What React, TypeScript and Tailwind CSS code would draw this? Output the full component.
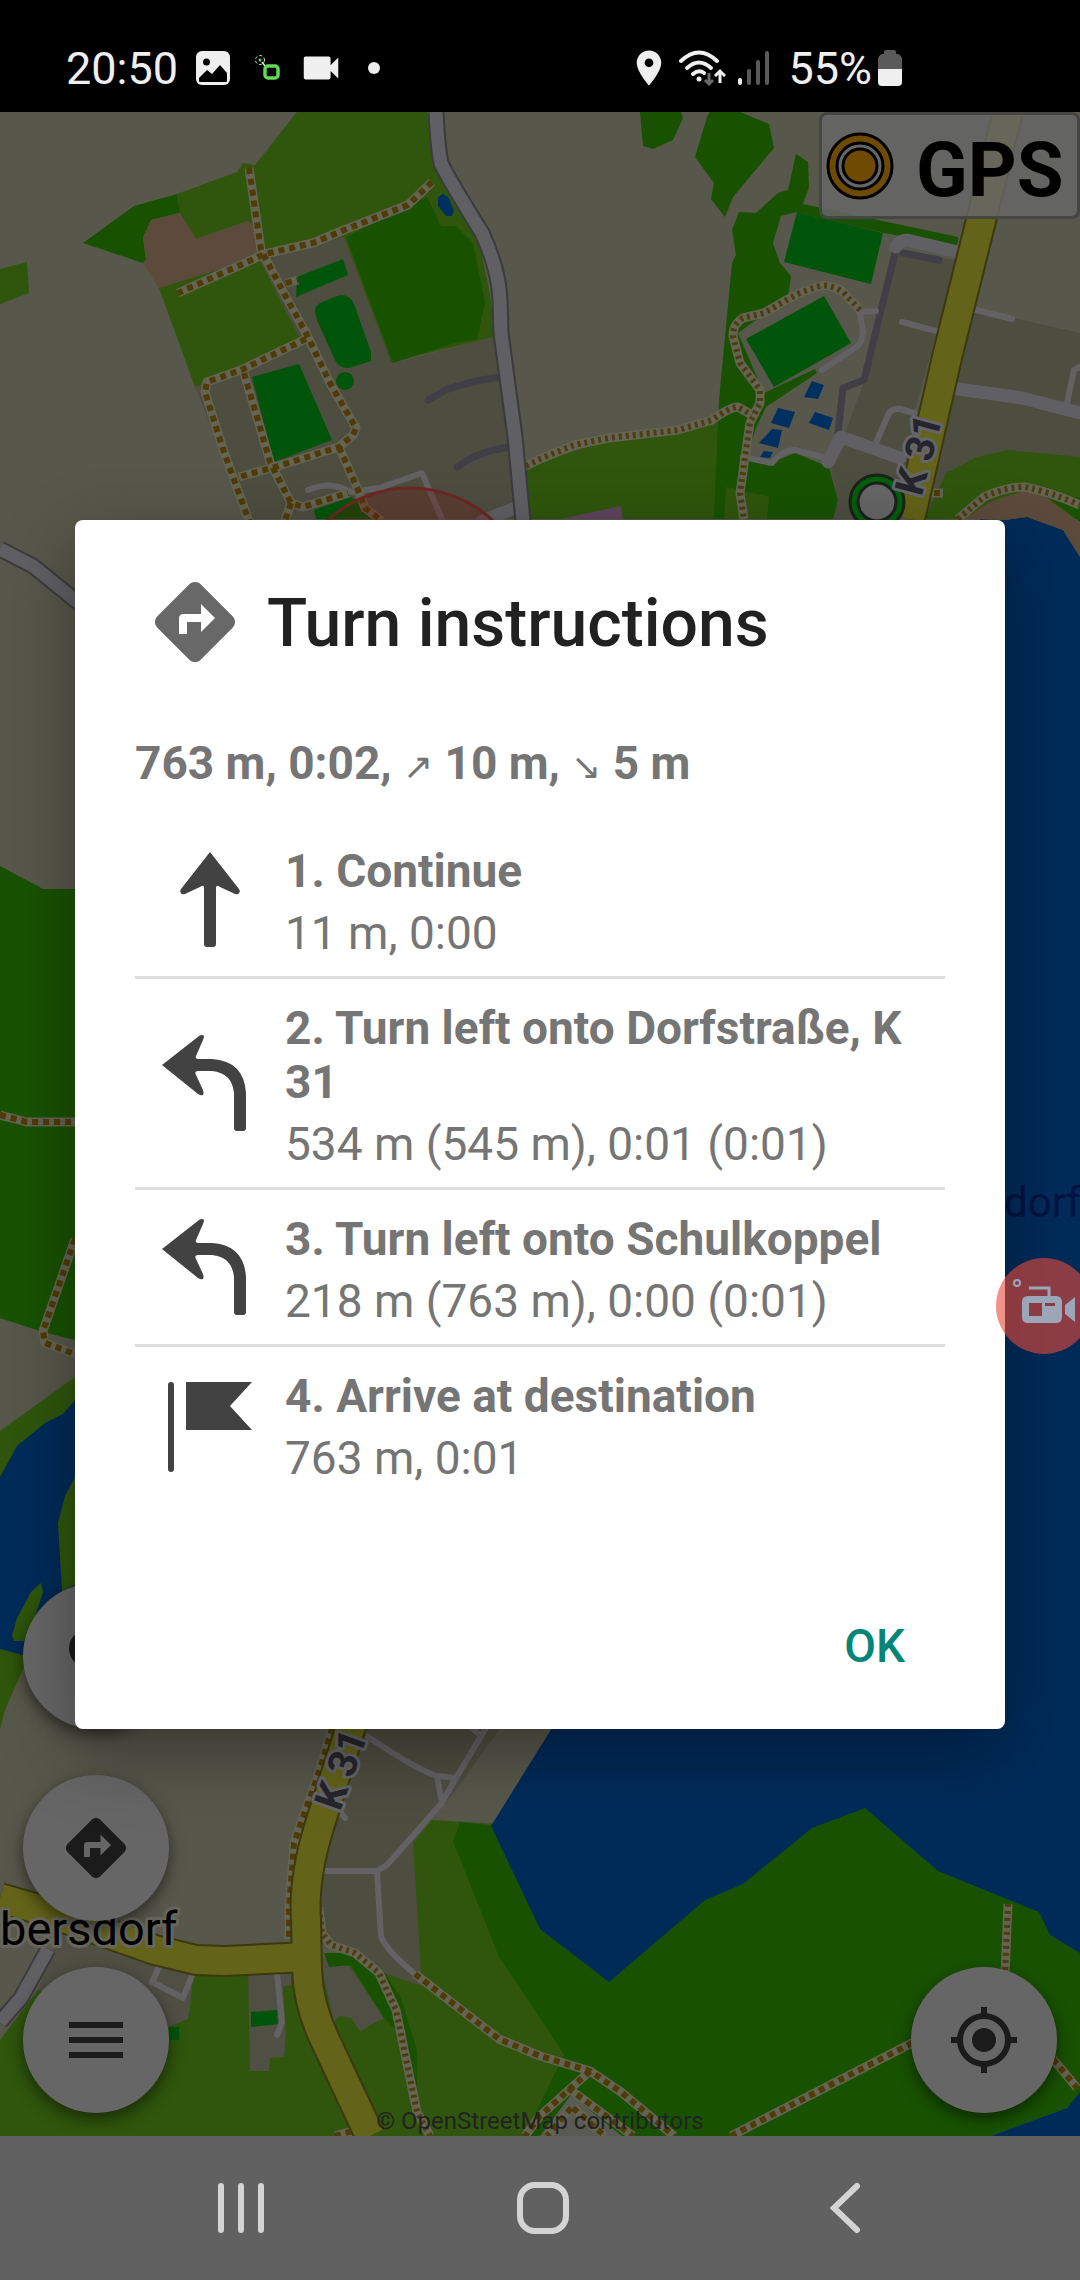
import { MdDirections, MdLocationOn, MdMenu, MdMyLocation, MdSearch, MdVideocam } from 'react-icons/md'

type Step = {
  title: string
  detail: string
  icon: 'straight' | 'left' | 'flag'
}

const steps: Step[] = [
  { title: '1. Continue', detail: '11 m, 0:00', icon: 'straight' },
  { title: '2. Turn left onto Dorfstraße, K 31', detail: '534 m (545 m), 0:01 (0:01)', icon: 'left' },
  { title: '3. Turn left onto Schulkoppel', detail: '218 m (763 m), 0:00 (0:01)', icon: 'left' },
  { title: '4. Arrive at destination', detail: '763 m, 0:01', icon: 'flag' },
]

const residential = [
  '258,257 344,237 393,363 494,337 525,519 250,519 195,387 300,338',
  '896,253 957,260 915,410 900,519 833,519 838,500 830,465 846,430 865,380',
  '970,308 1080,333 1080,460 1008,450 950,470 925,519 910,519',
  '355,1728 500,1728 456,1790 413,1843 425,1984 401,1996 382,1969 325,1945 310,1900',
]

const meadows = [
  '297,112 427,112 434,168 479,240 491,300 494,337 391,362 344,237 265,255 258,240 248,221 196,239 180,213 177,194 237,172 243,163 255,165',
  '159,288 258,257 300,338 238,370 195,387',
  '0,269 27,262 29,293 0,304',
  '526,470 540,462 609,440 712,422 722,410 720,519 524,519',
  '946,473 977,457 1008,450 1080,457 1080,519 925,519',
  '0,1431 75,1377 75,1500 0,1500',
  '0,1649 23,1654 24,1667 5,1710 0,1729',
  '0,2040 38,1990 189,1975 248,1975 310,1975 330,1955 422,1986 413,1843 432,1820 600,1830 600,2136 0,2136',
]

const woods = [
  '427,197 441,226 456,226 473,243 485,303 477,339 455,343 393,363 346,237 410,205',
  '83,243 134,206 177,194 180,213 151,220 143,237 146,260 143,263',
  '640,112 681,112 683,118 673,140 653,149 643,146',
  '710,112 740,112 769,124 774,148 733,197 725,217 711,199 714,183 695,157 707,117',
  '796,154 808,162 809,187 803,204 958,237 957,247 884,233 797,212 781,216 773,243 780,263 791,276 788,297 738,333 764,393 815,369 817,373 766,407 755,430 747,457 778,460 795,453 829,467 838,500 833,519 714,519 719,400 732,263 736,255 732,230 739,212 756,213 778,193 788,190',
  '0,866 43,889 75,889 75,1340 40,1331 0,1318',
  '324,1953 351,1953 382,1969 401,1998 417,2051 417,2108 411,2108 405,2039 384,2018 351,1965 329,1967',
  '1046,497 1080,497 1080,522 1062,508',
]

const pitches = [
  '297,277 343,259 348,275 296,297',
  '252,377 299,364 332,440 274,462',
  '314,510 351,497 368,506 376,519 316,519',
  '797,212 883,233 871,284 784,262',
  '824,296 851,343 774,387 746,339',
  '251,2012 277,2010 278,2024 251,2027',
  '169,2027 179,2027 179,2040 169,2040',
]

const ponds = [
  '438,197 443,194 448,197 454,210 452,216 446,216 438,206',
  '812,381 824,385 818,399 804,397',
  '778,408 795,412 789,428 771,423',
  '815,412 833,418 829,430 809,423',
  '772,429 782,430 778,448 759,443',
  '764,451 773,452 770,458 760,457',
]

const tracks = [
  'M249 168L261 250L286 297L306 333L331 385L356 428L353 435L339 447L275 467L239 477',
  'M432 182L408 205L344 230L313 243L265 254L178 293',
  'M306 339L241 370L207 382L205 392L224 452L249 521',
  'M244 373L257 417L270 462L291 503L303 507L348 493',
  'M291 503L285 521',
  'M339 447L358 490L365 508L382 521',
  'M286 283L298 280',
  'M912 493L943 493',
  'M0 1115L27 1122L75 1122',
  'M75 1239L43 1331L45 1343L75 1354',
  'M332 1728L320 1769L294 1843L289 1908L289 1939',
  'M415 1974L499 2039L540 2056L590 2071L621 2092L674 2136',
  'M731 2136L912 2043L940 2030',
  'M1053 2059L1077 2088',
  'M590 2071L571 2088L540 2116L525 2136',
  'M568 2088L633 2136',
  'M573 2108L605 2136',
  'M571 2108L547 2136',
  'M335 2136L353 2131',
]

const footpaths = [
  'M526 466L540 459L574 445L609 438L678 430L712 420Q730 407 738 407L752 415',
  'M860 310L843 292Q830 284 820 286Q805 290 790 298L764 313L743 318Q733 324 733 336L740 363L760 390L760 403L750 423L745 457L740 493L744 519',
  'M958 519L984 497Q1005 487 1025 487Q1050 492 1080 505',
  'M319 1908L322 1933L331 1945L355 1953L379 1973L396 2010L406 2059L417 2112L430 2136',
  'M1008 1904L1005 1975',
]

const lanes = [
  'M308 490Q331 480 351 492L379 488L422 473L442 519',
  'M876 311L860 312L863 333Q862 344 855 348L822 370',
  'M902 322L936 331',
  'M972 309L1012 319',
  'M876 443L888 415Q891 408 900 409L914 413',
  'M1067 403L1074 370L1080 367',
  'M743 457L772 463Q782 450 795 450L826 458',
  'M368 1737L396 1755Q420 1770 437 1776L456 1778',
  'M486 1728L456 1778L441 1804L387 1865L377 1871L320 1871',
  'M377 1871L381 1937Q388 1952 415 1974',
  'M437 1776L441 1798',
  'M472 1728L480 1735',
  'M160 1965L152 1982L183 1998L193 1973',
  'M277 1973L282 2022L277 2035',
  'M336 1808L345 1818',
]

const alleys = [
  'M428 400L448 389Q475 380 501 377',
  'M457 467Q480 450 513 447',
  'M895 253L864 380L843 388L838 433',
  'M903 253L939 260',
]

const streets = [
  'M482 521L518 507',
  'M896 247Q900 240 907 240L958 252',
  'M828 462L841 437L900 458',
  'M951 388L1022 398L1080 413',
]

const countryRoads = [
  'M436 112Q438 150 441 163Q446 175 482 233Q499 270 500 300L501 333L515 437L523 521',
  'M0 549L33 566L75 600L110 625',
  'M48 1949L21 1998L0 2022',
]

const mainRoads = [
  'M1008 112L948 353L910 519',
  'M0 1898L38 1909L155 1950L196 1960L224 1961L307 1957',
  'M353 1720L319 1827Q303 1880 306 1920L307 1969Q308 2005 325 2040L370 2136',
]

function MapCanvas() {
  return (
    <svg
      viewBox="0 112 1080 2024"
      preserveAspectRatio="xMidYMid slice"
      className="absolute inset-0 h-full w-full"
      fontFamily="Roboto, sans-serif"
      strokeLinejoin="round"
      aria-hidden="true"
    >
      <rect y="112" width="1080" height="2024" fill="#57574b" />
      {residential.map((p) => <polygon key={p} points={p} fill="#4d4d40" />)}
      {meadows.map((p) => <polygon key={p} points={p} fill="#2f560c" />)}
      <polygon points="38,1990 60,1930 195,1960 190,2008 188,2019 169,2027" fill="#4f4f44" />
      <polygon points="248,1970 291,1970 291,1986 283,1986 286,2035 284,2057 270,2058 269,2071 250,2071" fill="#4f4f44" />
      <polygon points="318,1955 350,1967 384,2018 360,2031 351,2018 340,2016 334,2022" fill="#4f4f44" />

      {/* lake, with the wooded shore in front of it */}
      <path d="M980 519L1005 520L1027 517L1063 530L1080 557V1960L640 1990H612L540 1931L491 1826L552 1728H980Z" fill="#002b59" />
      <path d="M0 1477L17 1446L45 1423L63 1414L75 1400V1590H62V1660L23 1655L0 1649Z" fill="#002b59" />
      <polygon points="75,1477 65,1496 58,1523 62,1591 75,1585" fill="#2f560c" />
      <polygon points="41,1583 43,1592 36,1614 24,1641 14,1641 12,1636 17,1618 31,1592" fill="#2f560c" />
      {woods.map((p) => <polygon key={p} points={p} fill="#185200" />)}
      <polygon
        points="460,1822 491,1826 540,1929 609,1982 705,1900 743,1884 812,1828 865,1808 938,1871 1039,1912 1050,1935 1080,1953 1080,2092 1067,2108 991,2136 525,2136 540,2104 564,2055 540,2018 499,1957 453,1841"
        fill="#185200"
      />
      <polygon points="1080,2092 1067,2108 991,2136 1080,2136" fill="#002b59" />
      <polygon points="726,487 769,497 767,519 724,519" fill="#2f560c" />
      <polygon points="180,213 151,220 143,237 146,260 143,263 159,288 258,257 253,225 248,221 196,239" fill="#5c4a3b" />
      <polygon points="965,519 988,503 1025,490 1046,497 1080,523 1080,557 1063,530 1027,517 1005,520" fill="#5c4a3b" />
      <polygon points="561,519 621,506 623,519" fill="#5f455f" />
      <polygon points="571,2095 540,2136 622,2136" fill="#5a5a55" />
      {pitches.map((p) => <polygon key={p} points={p} fill="#00550a" />)}
      <path d="M315 312Q315 306 320 303L337 296Q349 293 354 304L371 352V361L349 368Q340 369 335 360L317 320Z" fill="#00550a" />
      <circle cx="345" cy="381" r="9" fill="#00550a" />
      {ponds.map((p) => <polygon key={p} points={p} fill="#00305f" />)}

      <g fill="none">
        {alleys.map((d) => <path key={d} d={d} stroke="#403e47" strokeWidth="7" strokeLinecap="round" />)}
        {lanes.map((d) => <path key={d} d={d} stroke="#626264" strokeWidth="6" strokeLinecap="round" />)}
        {streets.map((d) => <path key={d} d={d} stroke="#605f63" strokeWidth="13" strokeLinecap="round" />)}
        {tracks.map((d) => <path key={d} d={d} stroke="#636454" strokeWidth="9" />)}
        {tracks.map((d) => <path key={d} d={d} stroke="#503a06" strokeWidth="6" strokeDasharray="6 5" />)}
        {footpaths.map((d) => <path key={d} d={d} stroke="#636454" strokeWidth="9" />)}
        {footpaths.map((d) => <path key={d} d={d} stroke="#503c10" strokeWidth="6" strokeDasharray="3 4" />)}
        {countryRoads.map((d) => <path key={d} d={d} stroke="#3a3c3b" strokeWidth="17" />)}
        {countryRoads.map((d) => <path key={d} d={d} stroke="#605f63" strokeWidth="13" />)}
        {mainRoads.map((d) => <path key={d} d={d} stroke="#3b390d" strokeWidth="32" />)}
        {mainRoads.map((d) => <path key={d} d={d} stroke="#636319" strokeWidth="28" />)}
      </g>

      <circle cx="410" cy="610" r="122" fill="#781e14" fillOpacity="0.3" stroke="#6e2722" strokeWidth="3" />
      <circle cx="877" cy="502" r="27" fill="#00600a" stroke="#1c211c" strokeWidth="3" />
      <circle cx="877" cy="502" r="19" fill="#666" stroke="#1c211c" strokeWidth="3" />

      <g fill="#25252b" stroke="#66666a" strokeWidth="6" paintOrder="stroke" fontSize="40" fontWeight="700" textAnchor="middle">
        <text transform="translate(932 458) rotate(-75)">K 31</text>
        <text transform="translate(354 1774) rotate(-70)">K 31</text>
      </g>
      <text x="0" y="1945" fontSize="47" fill="#000" stroke="#66665c" strokeWidth="6" paintOrder="stroke">bersdorf</text>
      <text x="1004" y="1217" fontSize="42" fill="#001342">dorf</text>
    </svg>
  )
}

function StatusBar() {
  return (
    <header className="flex h-28 shrink-0 items-center justify-between bg-black pt-6 pr-[178px] pl-[66px] text-[45px] leading-none text-[#efefef]">
      <div className="flex items-center">
        <span>20:50</span>
        <svg viewBox="0 0 34 34" className="ml-[18px] size-[34px]" aria-label="Picture saved">
          <rect width="34" height="34" rx="6" fill="currentColor" />
          <circle cx="10.500" cy="11" r="3.500" fill="#000" />
          <path d="M3 30V27L11 19L16 23L24 14L31 22V30Q31 31 30 31H4Q3 31 3 30Z" fill="#000" />
        </svg>
        <svg viewBox="0 0 28 28" className="ml-6 size-7" aria-label="Recorder" fill="none">
          <circle cx="6" cy="6" r="4.500" stroke="#d8e8d8" strokeWidth="1" strokeDasharray="3 2" />
          <circle cx="6" cy="6" r="1.500" fill="#62d858" />
          <path d="M8 8L11 12" stroke="#d8e8d8" strokeWidth="1.500" />
          <rect x="11" y="12" width="13" height="12" rx="3" stroke="#62d858" strokeWidth="3.500" />
        </svg>
        <MdVideocam className="ml-4 size-[46px]" />
        <span className="ml-6 size-3 rounded-full bg-[#efefef]" />
      </div>
      <div className="flex items-center">
        <MdLocationOn className="size-[42px]" />
        <svg viewBox="0 0 48 36" className="ml-2 h-9 w-12" fill="none" aria-label="Wi-Fi">
          <g stroke="currentColor" strokeWidth="4" strokeLinecap="round">
            <path d="M3 11Q21 -6 39 11" />
            <path d="M9 18Q21 7 33 18" />
            <path d="M15 24Q21 19 26 23" />
          </g>
          <circle cx="21" cy="29" r="2.500" fill="currentColor" />
          <path d="M31 23V34M27 30L31 34L35 30" stroke="#6a6a6a" strokeWidth="3" />
          <path d="M42 33V22M37 26L42 21L47 26" stroke="currentColor" strokeWidth="3" />
        </svg>
        <svg viewBox="0 0 34 36" className="ml-3 h-9 w-[34px]" strokeWidth="4" strokeLinecap="round" aria-label="Signal">
          <path d="M2 30V33" stroke="#efefef" />
          <path d="M11 21V33M20 12V33M29 3V33" stroke="#5a5a5a" />
        </svg>
        <span className="ml-4">55%</span>
        <svg viewBox="0 0 24 36" className="ml-1.5 h-9 w-6" aria-label="Battery">
          <path d="M6 2Q6 0 8 0H16Q18 0 18 2V4H20Q24 6 24 9V19H0V9Q0 6 4 4H6Z" fill="#5a5a5a" />
          <path d="M0 19H24V32Q24 36 20 36H4Q0 36 0 32Z" fill="currentColor" />
        </svg>
      </div>
    </header>
  )
}

function StepIcon({ icon }: { icon: Step['icon'] }) {
  return (
    <svg viewBox="0 0 96 96" className="size-24" fill="#424242" aria-hidden="true">
      {icon === 'straight' && (
        <path d="M48 1L77 38Q79 41 76 43Q74 44 71 42L58 36Q54 33 54 37V93Q54 96 51 96H45Q42 96 42 93V37Q42 33 38 36L25 42Q22 44 20 43Q17 41 19 38Z" />
      )}
      {icon === 'left' && (
        <path d="M0 30L37 1Q40 -1 42 1Q42 3 41 5L34 21Q33 24 36 24H50Q82 26 84 58V93Q84 96 81 96H75Q72 96 72 93V58Q70 38 50 36H36Q32 36 34 40L41 55Q42 58 41 60Q39 61 36 59Z" />
      )}
      {icon === 'flag' && (
        <>
          <rect x="6" y="6" width="6" height="90" rx="3" />
          <path d="M24 6H90L68 30L90 54H24Z" />
        </>
      )}
    </svg>
  )
}

function TurnDialog() {
  return (
    <section
      role="dialog"
      aria-labelledby="turn-title"
      className="relative flex w-full flex-col rounded-lg bg-white px-[60px] shadow-[0_24px_70px_rgba(0,0,0,0.35)]"
    >
      <div className="flex items-center gap-6 px-3 pt-[54px] text-[#212121]">
        <MdDirections className="size-24 text-[#686868]" />
        <h1 id="turn-title" className="pt-1 text-[66px] leading-[92px] font-medium">Turn instructions</h1>
      </div>
      <p className="mt-[66px] text-[46px] leading-[54px] font-bold text-[#757575]">
        763 m, 0:02, <span className="text-[36px] font-normal">↗</span> 10 m,{' '}
        <span className="text-[36px] font-normal">↘</span> 5 m
      </p>
      <ol className="mt-7 divide-y-3 divide-[#dedede] text-[46px] leading-[54px] text-[#757575]">
        {steps.map((step) => (
          <li key={step.title} className="flex items-center py-4">
            <div className="flex w-[150px] shrink-0 justify-center">
              <StepIcon icon={step.icon} />
            </div>
            <div className="pt-1.5">
              <h2 className="font-bold">{step.title}</h2>
              <p className="mt-2">{step.detail}</p>
            </div>
          </li>
        ))}
      </ol>
      <div className="mt-[104px] mb-10 flex justify-end">
        <button type="button" className="h-[84px] px-10 text-[46px] font-medium text-[#058577]">OK</button>
      </div>
    </section>
  )
}

const fab = 'flex size-[146px] items-center justify-center rounded-full bg-[#666] text-[#1b1b1b] shadow-[0_6px_16px_rgba(0,0,0,0.5)]'

function App() {
  return (
    <div className="flex min-h-screen flex-col overflow-x-hidden bg-[#616161] font-['Roboto',sans-serif]">
      <StatusBar />
      <main className="relative flex flex-1 flex-col justify-center overflow-hidden px-[75px]">
        <MapCanvas />

        <div className="absolute top-0 right-0 flex h-[107px] w-[261px] items-center gap-[22px] rounded-lg border-3 border-[#454541] bg-[#666]/85 pl-1">
          <svg viewBox="0 0 68 68" className="size-[68px]" stroke="#000" strokeWidth="3" aria-hidden="true">
            <circle cx="34" cy="34" r="32" fill="#6f4a02" />
            <circle cx="34" cy="34" r="23" fill="#666" />
            <circle cx="34" cy="34" r="17" fill="#6f4a02" />
          </svg>
          <span className="pt-2 text-[76px] leading-none font-bold text-black">GPS</span>
        </div>

        <div className="absolute bottom-[23px] left-[23px] flex flex-col gap-[46px]">
          <button type="button" aria-label="Search" className={fab}><MdSearch className="size-[72px]" /></button>
          <button type="button" aria-label="Directions" className={fab}><MdDirections className="size-[72px]" /></button>
          <button type="button" aria-label="Menu" className={fab}><MdMenu className="size-[72px]" /></button>
        </div>
        <div className="absolute right-[23px] bottom-[23px]">
          <button type="button" aria-label="My location" className={fab}><MdMyLocation className="size-[72px]" /></button>
        </div>
        <p className="absolute inset-x-0 bottom-0 text-center text-[24px] leading-[30px] text-[#222]">© OpenStreetMap contributors</p>

        <TurnDialog />

        {/* screen recorder bubble, half off the edge */}
        <button type="button" aria-label="Screen recorder" className="absolute top-[1146px] -right-3 size-24 rounded-full bg-[#e84a38]/60">
          <svg viewBox="0 0 96 96" className="size-24" fill="#9ba6b8" aria-hidden="true">
            <circle cx="21" cy="25" r="3" fill="none" stroke="#9ba6b8" strokeWidth="2" />
            <path d="M33 30H53V38" fill="none" stroke="#9ba6b8" strokeWidth="3" />
            <path fillRule="evenodd" d="M32 38H60Q66 38 66 44V59Q66 65 60 65H32Q26 65 26 59V44Q26 38 32 38ZM33 45V58H46V45ZM49 45V48H59V45Z" />
            <path d="M69 47L79 39V64L69 56Z" />
          </svg>
        </button>
      </main>
      <nav className="grid h-36 shrink-0 grid-cols-3 pr-[84px] pl-[90px] text-[#d4d4d4]">
        <button type="button" aria-label="Recent apps" className="flex items-center justify-center">
          <svg viewBox="0 0 50 52" className="h-[52px] w-[50px]" stroke="currentColor" strokeWidth="6" strokeLinecap="round">
            <path d="M5 4V48M25 4V48M45 4V48" />
          </svg>
        </button>
        <button type="button" aria-label="Home" className="flex items-center justify-center">
          <svg viewBox="0 0 54 54" className="size-[54px]" fill="none" stroke="currentColor" strokeWidth="6">
            <rect x="4" y="4" width="46" height="46" rx="15" />
          </svg>
        </button>
        <button type="button" aria-label="Back" className="flex items-center justify-center">
          <svg viewBox="0 0 32 54" className="h-[54px] w-8" fill="none" stroke="currentColor" strokeWidth="6" strokeLinecap="round">
            <path d="M28 5L5 27L28 49" />
          </svg>
        </button>
      </nav>
    </div>
  )
}

export default App
